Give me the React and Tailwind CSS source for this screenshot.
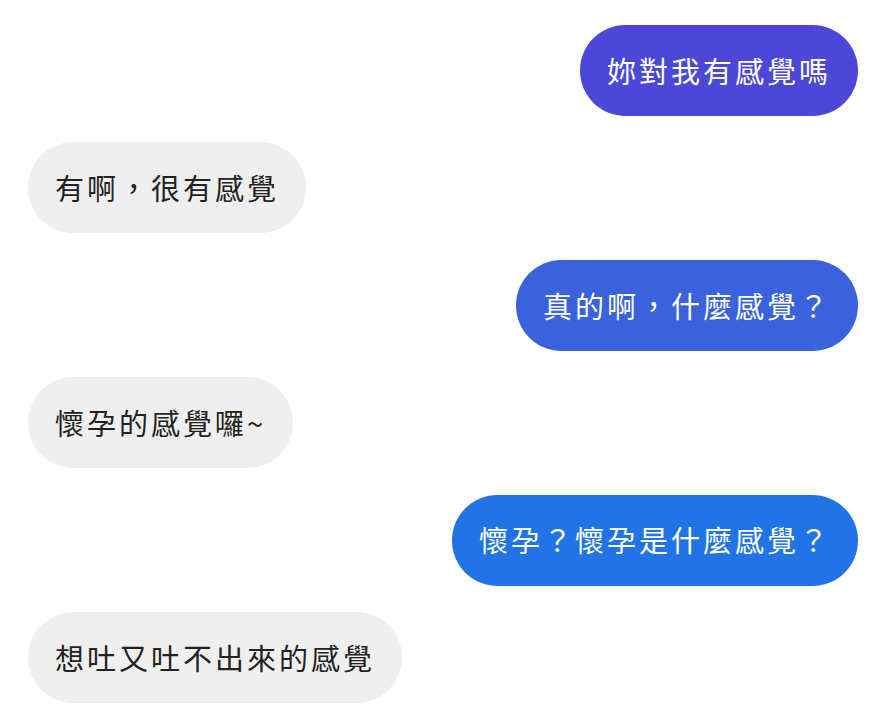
// chat screenshot: alternating bubbles
const messages = [
    { me: true, text: "妳對我有感覺嗎", bg: "bg-[#4b48d7]" },
    { me: false, text: "有啊，很有感覺" },
    { me: true, text: "真的啊，什麼感覺？", bg: "bg-[#3a62dc]" },
    { me: false, text: "懷孕的感覺囉~" },
    { me: true, text: "懷孕？懷孕是什麼感覺？", bg: "bg-[#2273e6]" },
    { me: false, text: "想吐又吐不出來的感覺" },
];

export default function App() {
    return (
        <div className="w-[869px] h-[720px] bg-white overflow-hidden pt-[25px] pl-[28px] pr-[11px] flex flex-col gap-[26.4px] font-['Noto_Sans_CJK_TC','Noto_Sans',sans-serif]">
            {messages.map((m, i) => (
                <div key={i} className={`flex ${m.me ? "justify-end" : "justify-start"}`}>
                    <div
                        className={`h-[91px] rounded-full px-[27px] flex items-center text-[29px] tracking-[3px] whitespace-nowrap ${
                            m.me ? `${m.bg} text-white` : "bg-[#efefef] text-[#222222]"
                        }`}
                    >
                        {m.text}
                    </div>
                </div>
            ))}
        </div>
    );
}
